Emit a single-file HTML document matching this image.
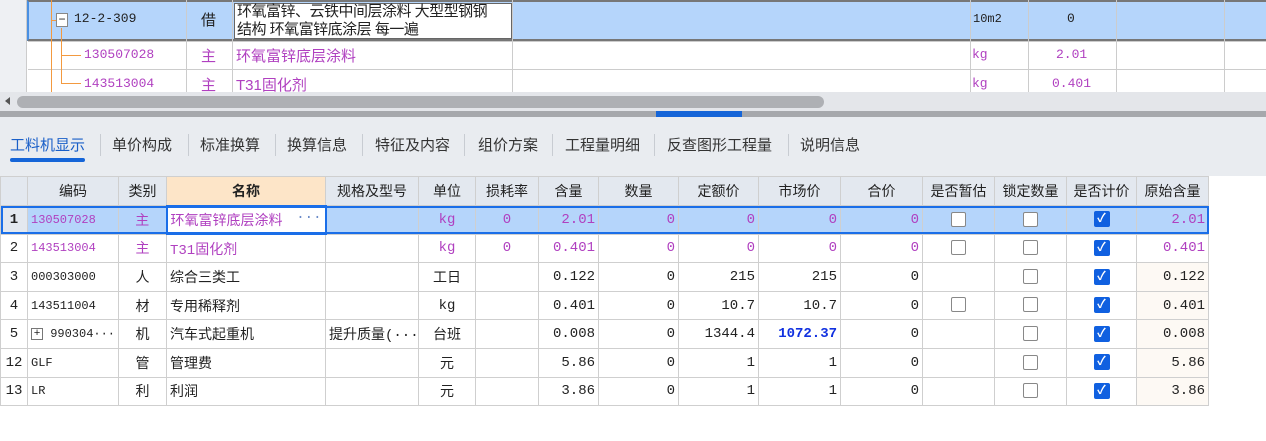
<!DOCTYPE html>
<html><head><meta charset="utf-8"><style>
*{margin:0;padding:0;box-sizing:border-box}
body{width:1266px;height:441px;overflow:hidden;background:#fff;font-family:"Liberation Sans","Noto Sans CJK SC",sans-serif;position:relative;font-size:14px;color:#222}
.a{position:absolute}
.mono{font-family:"Liberation Mono","Noto Sans CJK SC",monospace}
.pur{color:#b040c0}
table{border-collapse:collapse;table-layout:fixed;position:absolute}
td{border:1px solid #cfcfcf;height:28.6px;padding:0 3px;white-space:nowrap;overflow:hidden;font-size:14px}
.r{text-align:right}.c{text-align:center}
.hd td{background:#e3e8ef;text-align:center;height:29px;color:#222}
.cb{display:inline-block;width:15px;height:15px;border:1px solid #888;border-radius:2px;background:#fff;vertical-align:middle}
.ck{display:inline-block;width:16px;height:16px;border-radius:2px;background:#1060e0;color:#fff;font-size:12px;line-height:16px;text-align:center;vertical-align:middle;font-weight:bold}
.tab{position:absolute;top:134px;font-size:15px;color:#333}
.sep{position:absolute;top:134px;width:1px;height:22px;background:#c8ccd2}
</style></head><body>
<div class="a" style="left:0;top:0;width:27px;height:95px;background:#eef0f3;border-right:1px solid #ccc"></div>
<div class="a" style="left:27px;top:0;width:1239px;height:41px;background:#b5d5fb;border-top:2px solid #777;border-bottom:2px solid #777;border-left:2px solid #4a90e2"></div>
<div class="a" style="left:234px;top:3px;width:278px;height:36px;background:#fff;border:1px solid #666"></div>
<div class="a" style="left:28px;top:41px;width:1238px;height:1px;background:#ccc"></div>
<div class="a" style="left:28px;top:69px;width:1238px;height:1px;background:#ccc"></div>
<div class="a" style="left:186px;top:0;width:1px;height:95px;background:#ccc"></div>
<div class="a" style="left:232px;top:0;width:1px;height:95px;background:#ccc"></div>
<div class="a" style="left:512px;top:0;width:1px;height:95px;background:#ccc"></div>
<div class="a" style="left:970px;top:0;width:1px;height:95px;background:#ccc"></div>
<div class="a" style="left:1028px;top:0;width:1px;height:95px;background:#ccc"></div>
<div class="a" style="left:1116px;top:0;width:1px;height:95px;background:#ccc"></div>
<div class="a" style="left:1224px;top:0;width:1px;height:95px;background:#ccc"></div>
<div class="a" style="left:51px;top:0;width:1px;height:95px;background:#f39a40"></div>
<div class="a" style="left:51px;top:20px;width:6px;height:1px;background:#f39a40"></div>
<div class="a" style="left:61px;top:28px;width:1px;height:56px;background:#f39a40"></div>
<div class="a" style="left:61px;top:55px;width:20px;height:1px;background:#f39a40"></div>
<div class="a" style="left:61px;top:83px;width:20px;height:1px;background:#f39a40"></div>
<div class="a" style="left:56px;top:13px;width:12px;height:14px;border:1px solid #888;background:#fff;font-size:12px;line-height:10px;text-align:center">−</div>
<div class="a mono" style="left:74px;top:11px;font-size:13px">12-2-309</div>
<div class="a" style="left:201px;top:9px;font-size:15px">借</div>
<div class="a" style="left:237px;top:3px;font-size:15px;line-height:18px;letter-spacing:-0.5px">环氧富锌、云铁中间层涂料 大型型钢钢<br>结构 环氧富锌底涂层 每一遍</div>
<div class="a mono" style="left:973px;top:12px;font-size:12px">10m2</div>
<div class="a mono" style="left:1067px;top:11px;font-size:13px">0</div>
<div class="a mono pur" style="left:84px;top:47px;font-size:13px">130507028</div>
<div class="a pur" style="left:201px;top:45px;font-size:15px">主</div>
<div class="a pur" style="left:236px;top:45px;font-size:15px">环氧富锌底层涂料</div>
<div class="a mono pur" style="left:972px;top:47px;font-size:13px">kg</div>
<div class="a mono pur" style="left:1056px;top:47px;font-size:13px">2.01</div>
<div class="a mono pur" style="left:84px;top:76px;font-size:13px">143513004</div>
<div class="a pur" style="left:201px;top:74px;font-size:15px">主</div>
<div class="a pur" style="left:236px;top:74px;font-size:15px">T31固化剂</div>
<div class="a mono pur" style="left:972px;top:76px;font-size:13px">kg</div>
<div class="a mono pur" style="left:1052px;top:76px;font-size:13px">0.401</div>
<div class="a" style="left:0;top:92px;width:1266px;height:19px;background:#e4e6ea"></div>
<div class="a" style="left:5px;top:97px;width:0;height:0;border-top:4px solid transparent;border-bottom:4px solid transparent;border-right:5px solid #555"></div>
<div class="a" style="left:17px;top:96px;width:807px;height:12px;background:#aeb0b4;border-radius:6px"></div>
<div class="a" style="left:0;top:111px;width:1266px;height:6px;background:#a6a8ac"></div>
<div class="a" style="left:656px;top:111px;width:86px;height:6px;background:#1565d8"></div>
<div class="a" style="left:0;top:117px;width:1266px;height:59px;background:#e9ecf0"></div>
<div class="tab" style="left:10px;color:#1a5fc8">工料机显示</div>
<div class="a" style="left:10px;top:158px;width:75px;height:4px;background:#1565d8;border-radius:2px"></div>
<div class="sep" style="left:100px"></div>
<div class="tab" style="left:112px">单价构成</div>
<div class="sep" style="left:188px"></div>
<div class="tab" style="left:200px">标准换算</div>
<div class="sep" style="left:275px"></div>
<div class="tab" style="left:287px">换算信息</div>
<div class="sep" style="left:362px"></div>
<div class="tab" style="left:375px">特征及内容</div>
<div class="sep" style="left:464px"></div>
<div class="tab" style="left:478px">组价方案</div>
<div class="sep" style="left:552px"></div>
<div class="tab" style="left:565px">工程量明细</div>
<div class="sep" style="left:654px"></div>
<div class="tab" style="left:667px">反查图形工程量</div>
<div class="sep" style="left:788px"></div>
<div class="tab" style="left:800px">说明信息</div>
<table style="left:0;top:176px;width:1208px" class="mono">
<colgroup><col style="width:27px"><col style="width:91px"><col style="width:48px"><col style="width:159px"><col style="width:93px"><col style="width:57px"><col style="width:63px"><col style="width:60px"><col style="width:80px"><col style="width:80px"><col style="width:82px"><col style="width:82px"><col style="width:72px"><col style="width:72px"><col style="width:70px"><col style="width:72px"></colgroup>
<tr class="hd" style="font-family:'Liberation Sans','Noto Sans CJK SC',sans-serif"><td></td><td>编码</td><td>类别</td><td style="background:#fde5c8;font-weight:bold">名称</td><td>规格及型号</td><td>单位</td><td>损耗率</td><td>含量</td><td>数量</td><td>定额价</td><td>市场价</td><td>合价</td><td>是否暂估</td><td>锁定数量</td><td>是否计价</td><td>原始含量</td></tr>
<tr class="pur" style="background:#b5d5fb;outline:2px solid #1a6ee8;outline-offset:-2px"><td class="c" style="background:#e3e8ef;color:#222;font-weight:bold">1</td><td style="font-size:12px">130507028</td><td class="c">主</td><td style="background:#fff;border:2px solid #1a6ee8">环氧富锌底层涂料 <span style="float:right;color:#6a8ac8">···</span></td><td></td><td class="c">kg</td><td class="c">0</td><td class="r">2.01</td><td class="r">0</td><td class="r">0</td><td class="r">0</td><td class="r">0</td><td class="c"><span class="cb"></span></td><td class="c"><span class="cb"></span></td><td class="c"><span class="ck">✓</span></td><td class="r">2.01</td></tr>
<tr class="pur"><td class="c" style="color:#222">2</td><td style="font-size:12px">143513004</td><td class="c">主</td><td>T31固化剂</td><td></td><td class="c">kg</td><td class="c">0</td><td class="r">0.401</td><td class="r">0</td><td class="r">0</td><td class="r">0</td><td class="r">0</td><td class="c"><span class="cb"></span></td><td class="c"><span class="cb"></span></td><td class="c"><span class="ck">✓</span></td><td class="r">0.401</td></tr>
<tr><td class="c">3</td><td style="font-size:12px">000303000</td><td class="c">人</td><td>综合三类工</td><td></td><td class="c">工日</td><td></td><td class="r">0.122</td><td class="r">0</td><td class="r">215</td><td class="r">215</td><td class="r">0</td><td></td><td class="c"><span class="cb"></span></td><td class="c"><span class="ck">✓</span></td><td class="r" style="background:#fdf9f4">0.122</td></tr>
<tr><td class="c">4</td><td style="font-size:12px">143511004</td><td class="c">材</td><td>专用稀释剂</td><td></td><td class="c">kg</td><td></td><td class="r">0.401</td><td class="r">0</td><td class="r">10.7</td><td class="r">10.7</td><td class="r">0</td><td class="c"><span class="cb"></span></td><td class="c"><span class="cb"></span></td><td class="c"><span class="ck">✓</span></td><td class="r" style="background:#fdf9f4">0.401</td></tr>
<tr><td class="c">5</td><td style="font-size:12px"><span style="display:inline-block;width:12px;height:12px;border:1px solid #777;font-size:11px;line-height:10px;text-align:center;vertical-align:middle">+</span> 990304···</td><td class="c">机</td><td>汽车式起重机</td><td>提升质量(···</td><td class="c">台班</td><td></td><td class="r">0.008</td><td class="r">0</td><td class="r">1344.4</td><td class="r" style="color:#1030e0;font-weight:bold">1072.37</td><td class="r">0</td><td></td><td class="c"><span class="cb"></span></td><td class="c"><span class="ck">✓</span></td><td class="r" style="background:#fdf9f4">0.008</td></tr>
<tr><td class="c">12</td><td style="font-size:12px">GLF</td><td class="c">管</td><td>管理费</td><td></td><td class="c">元</td><td></td><td class="r">5.86</td><td class="r">0</td><td class="r">1</td><td class="r">1</td><td class="r">0</td><td></td><td class="c"><span class="cb"></span></td><td class="c"><span class="ck">✓</span></td><td class="r" style="background:#fdf9f4">5.86</td></tr>
<tr><td class="c">13</td><td style="font-size:12px">LR</td><td class="c">利</td><td>利润</td><td></td><td class="c">元</td><td></td><td class="r">3.86</td><td class="r">0</td><td class="r">1</td><td class="r">1</td><td class="r">0</td><td></td><td class="c"><span class="cb"></span></td><td class="c"><span class="ck">✓</span></td><td class="r" style="background:#fdf9f4">3.86</td></tr>
</table>
</body></html>
